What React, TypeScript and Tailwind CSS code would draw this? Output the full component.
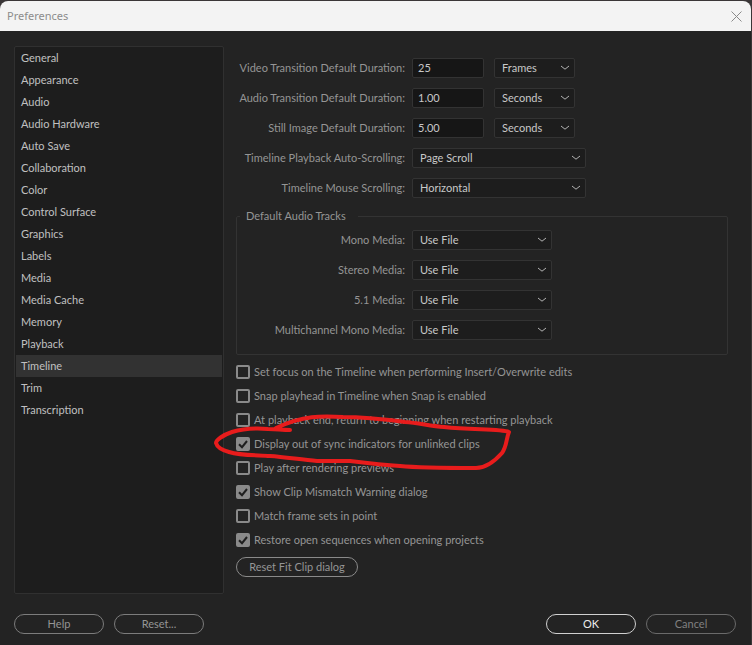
import { useState } from "react";

const categories = [
  "General",
  "Appearance",
  "Audio",
  "Audio Hardware",
  "Auto Save",
  "Collaboration",
  "Color",
  "Control Surface",
  "Graphics",
  "Labels",
  "Media",
  "Media Cache",
  "Memory",
  "Playback",
  "Timeline",
  "Trim",
  "Transcription",
];

const durations = [
  { id: "video-transition", label: "Video Transition Default Duration:", value: "25", unit: "Frames" },
  { id: "audio-transition", label: "Audio Transition Default Duration:", value: "1.00", unit: "Seconds" },
  { id: "still-image", label: "Still Image Default Duration:", value: "5.00", unit: "Seconds" },
];

const scrolling = [
  { id: "auto-scroll", label: "Timeline Playback Auto-Scrolling:", value: "Page Scroll" },
  { id: "mouse-scroll", label: "Timeline Mouse Scrolling:", value: "Horizontal" },
];

const tracks = [
  { id: "mono", label: "Mono Media:" },
  { id: "stereo", label: "Stereo Media:" },
  { id: "surround", label: "5.1 Media:" },
  { id: "multichannel", label: "Multichannel Mono Media:" },
];

const options = [
  { id: "focus", label: "Set focus on the Timeline when performing Insert/Overwrite edits", on: false },
  { id: "snap", label: "Snap playhead in Timeline when Snap is enabled", on: false },
  { id: "return", label: "At playback end, return to beginning when restarting playback", on: false },
  { id: "sync", label: "Display out of sync indicators for unlinked clips", on: true },
  { id: "render", label: "Play after rendering previews", on: false },
  { id: "mismatch", label: "Show Clip Mismatch Warning dialog", on: true },
  { id: "match", label: "Match frame sets in point", on: false },
  { id: "restore", label: "Restore open sequences when opening projects", on: true },
];

function Dropdown({ id, value, width, label }: { id: string; value: string; width: string; label?: string }) {
  return (
    <div className={`relative ${width}`}>
      <select
        id={id}
        aria-label={label}
        defaultValue={value}
        className="block h-5 w-full appearance-none rounded-xs border border-[#333333] bg-[#1d1d1d] pl-[7px] leading-4 text-[#c8c8c8] outline-none"
      >
        <option>{value}</option>
      </select>
      <svg
        viewBox="0 0 10 6"
        className="pointer-events-none absolute top-[7px] right-[5px] h-[6px] w-[10px]"
        fill="none"
        stroke="#b4b4b4"
        strokeWidth="1"
      >
        <path d="M1 1l4 3.2L9 1" />
      </svg>
    </div>
  );
}

function PillButton({ children, tone, width }: { children: string; tone: string; width: string }) {
  return (
    <button type="button" className={`h-5 rounded-full border text-center leading-4 ${tone} ${width}`}>
      {children}
    </button>
  );
}

function Check({ id, label, on }: { id: string; label: string; on: boolean }) {
  const [checked, setChecked] = useState(on);
  return (
    <div className="flex h-6 items-center gap-1">
      <div className="relative size-[14px]">
        <input
          id={id}
          type="checkbox"
          checked={checked}
          onChange={() => setChecked(!checked)}
          className="block size-[14px] appearance-none rounded-xs border-2 border-[#8a8a8a] checked:bg-[#8a8a8a]"
        />
        {checked && (
          <svg
            viewBox="0 0 14 14"
            className="pointer-events-none absolute inset-0 size-[14px]"
            fill="none"
            stroke="#1f1f1f"
            strokeWidth="2"
          >
            <path d="M3 7.2l3 3L11 4" />
          </svg>
        )}
      </div>
      <label htmlFor={id}>{label}</label>
    </div>
  );
}

export default function App() {
  const [active, setActive] = useState("Timeline");

  return (
    <div className="min-h-screen bg-[#3a3637] pt-px pr-px font-['Lato','Noto_Sans',sans-serif] text-[11px] leading-4 text-[#959595]">
      <div className="flex min-h-[calc(100vh-1px)] flex-col rounded-t-lg bg-[#232323]">
        <header className="flex h-[30px] items-center justify-between rounded-t-lg bg-[#f3f3f3] pr-[9px] pl-[7px]">
          <h1 className="font-['Noto_Sans',sans-serif] text-[#8c8c8c]">Preferences</h1>
          <button type="button" aria-label="Close">
            <svg viewBox="0 0 11 11" className="size-[11px]" fill="none" stroke="#8a8a8a">
              <path d="M.5 .5l10 10M10.5 .5l-10 10" />
            </svg>
          </button>
        </header>

        <main className="flex grow gap-3 pt-[15px] pr-[23px] pl-[14px]">
          <nav className="w-[210px] shrink-0 rounded-xs border border-[#303030] bg-[#1d1d1d] px-px text-[#c0c0c0]">
            <ul>
              {categories.map((name) => (
                <li key={name}>
                  <button
                    type="button"
                    onClick={() => setActive(name)}
                    className={`block h-[22px] w-full pl-[5px] text-left ${name === active ? "bg-[#323232]" : ""}`}
                  >
                    {name}
                  </button>
                </li>
              ))}
            </ul>
          </nav>

          <form className="grow pt-3">
            <div className="flex flex-col gap-[10px]">
              {durations.map((row) => (
                <div key={row.id} className="flex h-5 items-center">
                  <label htmlFor={row.id} className="mr-[7px] w-[169px] text-right whitespace-nowrap">
                    {row.label}
                  </label>
                  <input
                    id={row.id}
                    type="text"
                    defaultValue={row.value}
                    className="mr-[10px] h-5 w-[72px] rounded-xs border border-[#333333] bg-[#161616] pb-[2px] pl-[5px] leading-4 text-[#c8c8c8] outline-none"
                  />
                  <Dropdown id={`${row.id}-unit`} value={row.unit} width="w-[81px]" label={`${row.label} unit`} />
                </div>
              ))}
              {scrolling.map((row) => (
                <div key={row.id} className="flex h-5 items-center">
                  <label htmlFor={row.id} className="mr-[7px] w-[169px] text-right whitespace-nowrap">
                    {row.label}
                  </label>
                  <Dropdown id={row.id} value={row.value} width="w-[174px]" />
                </div>
              ))}
            </div>

            <fieldset className="mt-[10px] rounded-xs border border-[#333333] px-[3px] pb-[14px]">
              <legend className="pr-3 pl-[6px]">Default Audio Tracks</legend>
              <div className="flex flex-col gap-[10px] pt-[6px]">
                {tracks.map((row) => (
                  <div key={row.id} className="flex h-5 items-center">
                    <label htmlFor={row.id} className="mr-[7px] w-[165px] text-right whitespace-nowrap">
                      {row.label}
                    </label>
                    <Dropdown id={row.id} value="Use File" width="w-[140px]" />
                  </div>
                ))}
              </div>
            </fieldset>

            <div className="relative mt-[5px]">
              {options.map((row) => (
                <Check key={row.id} {...row} />
              ))}
              {/* Red marker loop around the sync indicator option */}
              <svg
                viewBox="0 0 310 70"
                className="pointer-events-none absolute top-12 -left-[26px] h-[70px] w-[310px]"
                fill="none"
                stroke="#e81c1c"
                strokeWidth="4"
                strokeLinecap="round"
                strokeLinejoin="round"
              >
                <path d="M80 22 C72 22 66 21 58 21 C46 20 32 21 22 24 C13 27 6 32 6 35 C7 39 12 42 19 44 C32 48 48 47 60 48 C76 49 92 52 107 53 C120 53 130 53 140 53 C156 55 172 57 190 58 C210 60 233 60 266 60 C274 60 284 54 292 45 C297 38 296 31 299 24 C291 21 262 22 234 19 C220 18 209 15 195 14 C172 11 154 9 133 9 C112 8 94 7 66 20" />
              </svg>
            </div>

            <div className="mt-[5px] flex">
              <PillButton tone="border-[#8a8a8a]" width="w-[122px]">
                Reset Fit Clip dialog
              </PillButton>
            </div>
          </form>
        </main>

        <footer className="flex justify-between pt-5 pr-[15px] pb-[11px] pl-[14px]">
          <div className="flex gap-[10px]">
            <PillButton tone="border-[#7c7c7c]" width="w-[90px]">
              Help
            </PillButton>
            <PillButton tone="border-[#7c7c7c]" width="w-[90px]">
              Reset...
            </PillButton>
          </div>
          <div className="flex gap-[10px]">
            <PillButton tone="border-[#d0d0d0] text-[#ececec]" width="w-[90px]">
              OK
            </PillButton>
            <PillButton tone="border-[#6a6a6a] text-[#808080]" width="w-[90px]">
              Cancel
            </PillButton>
          </div>
        </footer>
      </div>
    </div>
  );
}
